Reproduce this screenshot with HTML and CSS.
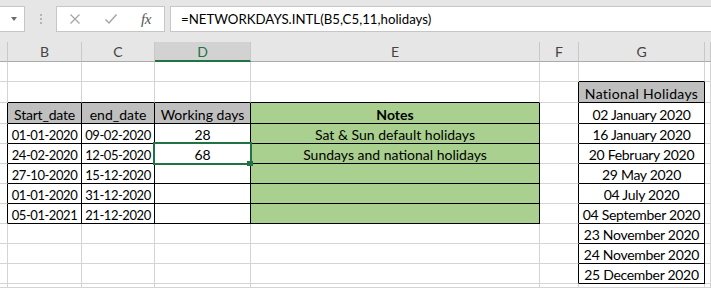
FILE: index.html
```html
<!DOCTYPE html>
<html>
<head>
<meta charset="utf-8">
<link rel="stylesheet" href="styles.css">
</head>
<body>
<div class="toolbar">
  <div class="namebox"><span class="caret"></span></div>
  <div class="grip"><i></i><i></i><i></i></div>
  <div class="btns">
    <svg class="ico" width="12" height="12" viewBox="0 0 12 12"><path d="M1.5 1.5 L10.5 10.5 M10.5 1.5 L1.5 10.5" stroke="#a6a6a6" stroke-width="1.3" fill="none"/></svg>
    <svg class="ico" width="14" height="12" viewBox="0 0 14 12"><path d="M1.5 6.5 L5 10 L12.5 1.5" stroke="#a6a6a6" stroke-width="1.5" fill="none"/></svg>
    <span class="fx">fx</span>
  </div>
  <div class="formula">=NETWORKDAYS.INTL(B5,C5,11,holidays)</div>
</div>

<div class="hdr">
  <div class="h"></div>
  <div class="h">B</div>
  <div class="h">C</div>
  <div class="h sel">D</div>
  <div class="h">E</div>
  <div class="h">F</div>
  <div class="h">G</div>
  <div class="h"></div>
</div>

<div class="sheet">
  <!-- row 1 -->
  <div class="c"></div><div class="c"></div><div class="c"></div><div class="c"></div><div class="c"></div><div class="c"></div><div class="c kb"></div><div class="c"></div>
  <!-- row 2 -->
  <div class="c"></div><div class="c kb"></div><div class="c kb"></div><div class="c kb"></div><div class="c kb"></div><div class="c kr"></div><div class="c kr kb gray wide">National Holidays</div><div class="c"></div>
  <!-- row 3 -->
  <div class="c kr"></div><div class="c kr kb gray tight">Start_date</div><div class="c kr kb gray">end_date</div><div class="c kr kb gray">Working days</div><div class="c kr kb green bold">Notes</div><div class="c kr"></div><div class="c kr kb day">02 January 2020</div><div class="c"></div>
  <!-- row 4 -->
  <div class="c kr"></div><div class="c kr kb num">01-01-2020</div><div class="c kr kb num">09-02-2020</div><div class="c kr kb">28</div><div class="c kr kb green">Sat &amp; Sun default holidays</div><div class="c kr"></div><div class="c kr kb day">16 January 2020</div><div class="c"></div>
  <!-- row 5 -->
  <div class="c kr"></div><div class="c kr kb num">24-02-2020</div><div class="c kr kb num">12-05-2020</div><div class="c kr kb active">68<span class="selbox"></span><span class="handle"></span></div><div class="c kr kb green">Sundays and national holidays</div><div class="c kr"></div><div class="c kr kb day">20 February 2020</div><div class="c"></div>
  <!-- row 6 -->
  <div class="c kr"></div><div class="c kr kb num">27-10-2020</div><div class="c kr kb num">15-12-2020</div><div class="c kr kb"></div><div class="c kr kb green"></div><div class="c kr"></div><div class="c kr kb day">29 May 2020</div><div class="c"></div>
  <!-- row 7 -->
  <div class="c kr"></div><div class="c kr kb num">01-01-2020</div><div class="c kr kb num">31-12-2020</div><div class="c kr kb"></div><div class="c kr kb green"></div><div class="c kr"></div><div class="c kr kb day">04 July 2020</div><div class="c"></div>
  <!-- row 8 -->
  <div class="c kr"></div><div class="c kr kb num">05-01-2021</div><div class="c kr kb num">21-12-2020</div><div class="c kr kb"></div><div class="c kr kb green"></div><div class="c kr"></div><div class="c kr kb day">04 September 2020</div><div class="c"></div>
  <!-- row 9 -->
  <div class="c"></div><div class="c"></div><div class="c"></div><div class="c"></div><div class="c"></div><div class="c kr"></div><div class="c kr kb day">23 November 2020</div><div class="c"></div>
  <!-- row 10 -->
  <div class="c"></div><div class="c"></div><div class="c"></div><div class="c"></div><div class="c"></div><div class="c kr"></div><div class="c kr kb day">24 November 2020</div><div class="c"></div>
  <!-- row 11 -->
  <div class="c"></div><div class="c"></div><div class="c"></div><div class="c"></div><div class="c"></div><div class="c kr"></div><div class="c kr kb day">25 December 2020</div><div class="c"></div>
  <!-- row 12 -->
  <div class="c"></div><div class="c"></div><div class="c"></div><div class="c"></div><div class="c"></div><div class="c"></div><div class="c"></div><div class="c"></div>
</div>
</body>
</html>
```

FILE: styles.css
```css
html, body {
  margin: 0;
  padding: 0;
  background: #ffffff;
  overflow: hidden;
}
body {
  width: 711px;
  height: 288px;
  font-family: "Lato", "Liberation Sans", sans-serif;
  font-size: 14px;
  color: #000;
}

.toolbar {
  height: 42px;
  box-sizing: border-box;
  background: #e6e6e6;
  display: flex;
  align-items: flex-start;
  padding-top: 6px;
}
.namebox {
  width: 25px;
  height: 26px;
  box-sizing: border-box;
  background: #fff;
  border: 1px solid #c6c6c6;
  border-left: none;
  display: flex;
  align-items: center;
  justify-content: center;
}
.caret {
  width: 0;
  height: 0;
  border-left: 3.5px solid transparent;
  border-right: 3.5px solid transparent;
  border-top: 4px solid #6b6b6b;
  margin-left: 4px;
  margin-top: -1px;
}
.grip {
  width: 31px;
  height: 26px;
  display: flex;
  flex-direction: column;
  align-items: center;
  justify-content: center;
  gap: 2px;
}
.grip i {
  display: block;
  width: 2px;
  height: 2px;
  background: #b4b4b4;
}
.btns {
  width: 109px;
  height: 26px;
  box-sizing: border-box;
  background: #fff;
  border: 1px solid #c6c6c6;
  display: flex;
  align-items: center;
  padding-left: 12px;
}
.btns .ico:first-child { margin-right: 23px; }
.btns .ico:nth-child(2) { margin-right: 23px; }
.fx {
  font-family: "Liberation Serif", serif;
  font-style: italic;
  font-size: 15px;
  color: #555;
  letter-spacing: -0.5px;
}
.formula {
  flex: 1;
  margin-left: 5px;
  height: 26px;
  box-sizing: border-box;
  background: #fff;
  border: 1px solid #c6c6c6;
  border-right: none;
  padding-left: 10px;
  line-height: 24px;
  font-size: 13.25px;
  color: #000;
}

.hdr, .sheet {
  display: grid;
  grid-template-columns: 8px 74px 73px 96px 289px 39px 126px 1fr;
}
.hdr {
  background: #e6e6e6;
  height: 20px;
}
.h {
  box-sizing: border-box;
  height: 20px;
  border-right: 1px solid #c8c8c8;
  border-bottom: 1px solid #ababab;
  text-align: center;
  line-height: 19px;
  color: #444;
}
.h.sel {
  background: #d2d2d2;
  border-bottom: 2px solid #217346;
  color: #217346;
}

.sheet {
  grid-template-rows: 20px 21px 21px repeat(8, 20px) 4px;
  height: 226px;
  overflow: hidden;
}
.c {
  box-sizing: border-box;
  border-right: 1px solid #d4d4d4;
  border-bottom: 1px solid #d4d4d4;
  display: flex;
  align-items: flex-end;
  justify-content: center;
  line-height: 16px;
  white-space: nowrap;
}
.c.kr { border-right-color: #000; }
.c.kb { border-bottom-color: #000; }
.gray { background: #bfbfbf; }
.green { background: #a9d08e; }
.bold { font-weight: bold; }
.num {
  font-size: 13px;
  letter-spacing: -0.45px;
}
.tight { letter-spacing: -0.2px; }
.day { letter-spacing: -0.3px; }
.wide { letter-spacing: 0.3px; }

.active { position: relative; }
.selbox {
  position: absolute;
  left: -2px;
  top: -2px;
  width: 99px;
  height: 23px;
  box-sizing: border-box;
  border: 2px solid #217346;
}
.handle {
  position: absolute;
  left: 92px;
  top: 17px;
  width: 6px;
  height: 5px;
  background: #217346;
}
```
